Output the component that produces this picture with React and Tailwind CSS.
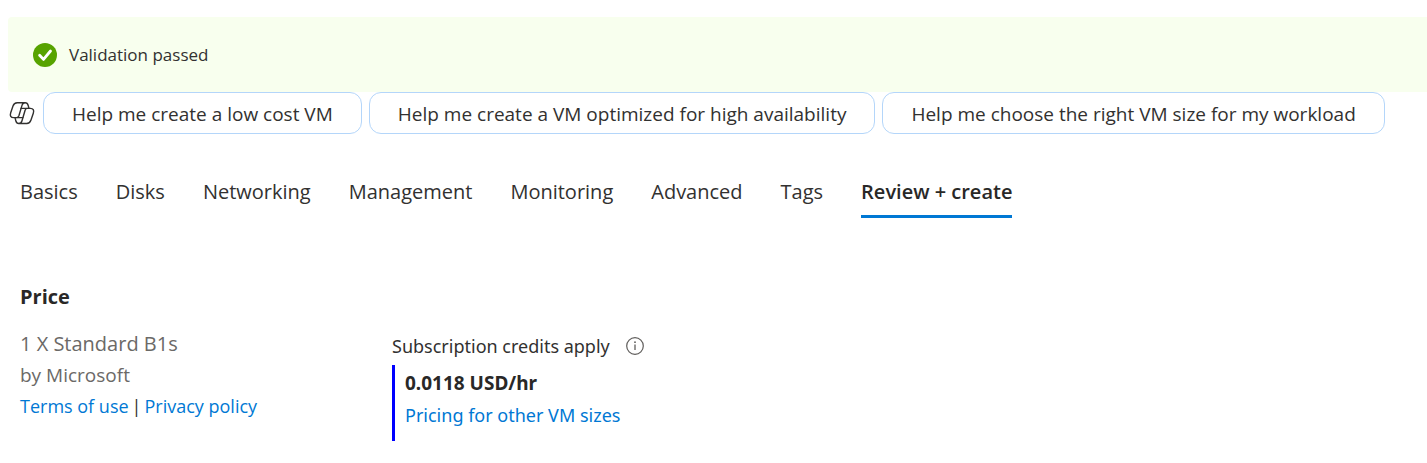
import React from 'react';

const suggestions = [
  'Help me create a low cost VM',
  'Help me create a VM optimized for high availability',
  'Help me choose the right VM size for my workload',
];

const tabs = ['Basics', 'Disks', 'Networking', 'Management', 'Monitoring', 'Advanced', 'Tags', 'Review + create'];

function PassedIcon() {
  return (
    <svg className="size-6 shrink-0" viewBox="0 0 24 24" aria-hidden="true">
      <circle cx="12" cy="12" r="12" fill="#57a300" />
      <path d="M6.600 12.200l3.900 4.200 7-8.400" fill="none" stroke="#fff" strokeWidth="2.800" strokeLinecap="round" strokeLinejoin="round" />
    </svg>
  );
}

function CopilotIcon() {
  return (
    <svg className="h-6 w-[26px] shrink-0" viewBox="0 0 26 24" fill="none" stroke="#323130" strokeWidth="1.4" strokeLinejoin="round" strokeLinecap="round" aria-hidden="true">
      <path d="M16.300 1.800H8.200C6 1.800 4.800 2.800 4 5.100L1.700 11.700C.7 14.700 1.800 16.600 4.600 16.600h3.100c1.200 0 1.800-.6 2.200-1.800L13 4.400c.5-1.700 1.500-2.600 3.300-2.600 1.700 0 2.400 1 2.900 2.700l.8 2.900" />
      <path d="M9.700 22.500h8.100c2.200 0 3.400-1.100 4.200-3.400l2.300-6.800c1-3-.1-4.900-2.900-4.900h-3.100c-1.200 0-1.800.6-2.200 1.800L13 19.800c-.5 1.700-1.500 2.700-3.300 2.700-1.700 0-2.400-1-2.900-2.800l-.8-3.100" />
      <path d="M12 7.400h6.300M7.700 16.600h6.200" />
    </svg>
  );
}

function InfoIcon() {
  return (
    <svg className="size-[18px]" viewBox="0 0 18 18" fill="none" aria-hidden="true">
      <circle cx="9" cy="9" r="8.300" stroke="#605e5c" strokeWidth="1.200" />
      <path d="M9 7.500V13" stroke="#605e5c" strokeWidth="1.300" />
      <circle cx="9" cy="5.200" r="0.900" fill="#605e5c" />
    </svg>
  );
}

export default function App() {
  return (
    <main className="bg-white pt-[17px] font-['Open_Sans','Noto_Sans',sans-serif] text-[19px] leading-[30px] text-[#323130]">
      <div role="status" className="ml-2 flex h-[75px] items-center gap-3 rounded-l-sm bg-[#f8ffee] pl-[25px] text-[17px]">
        <PassedIcon />
        <span className="pt-px">Validation passed</span>
      </div>

      <div className="flex items-center gap-2 pl-[9px]">
        <CopilotIcon />
        <div className="flex gap-[7px]">
          {suggestions.map((text) => (
            <button key={text} type="button" className="h-[42px] rounded-xl border border-[#b4d6fa] px-7 pt-px whitespace-nowrap">
              {text}
            </button>
          ))}
        </div>
      </div>

      <div role="tablist" className="mt-[42px] flex gap-[38px] pl-5 text-xl">
        {tabs.map((tab) => {
          const active = tab === 'Review + create';
          return (
            <button
              key={tab}
              type="button"
              role="tab"
              aria-selected={active}
              className={
                active
                  ? 'h-[42px] border-b-[3px] border-[#0078d4] pb-2 font-semibold whitespace-nowrap text-[#292827]'
                  : 'h-[42px] border-b-[3px] border-transparent pb-2 whitespace-nowrap'
              }
            >
              {tab}
            </button>
          );
        })}
      </div>

      <section className="px-5 pt-16">
        <h2 className="text-xl leading-[30px] font-bold text-[#292827]">Price</h2>
        <div className="mt-[17px] flex">
          <div className="w-[372px] shrink-0 text-[#6b6967]">
            <p className="text-xl leading-[30px]">1 X Standard B1s</p>
            <p className="leading-8">by Microsoft</p>
            <div className="flex gap-[3px] text-[18px] text-[#323130]">
              <a href="#terms" className="text-[#0078d4]">Terms of use</a>
              <span>|</span>
              <a href="#privacy" className="text-[#0078d4]">Privacy policy</a>
            </div>
          </div>
          <div className="font-['Noto_Sans','Open_Sans',sans-serif] text-[18px]">
            <div className="flex items-center gap-4 pt-[2px]">
              <span>Subscription credits apply</span>
              <button type="button" aria-label="More information about subscription credits">
                <InfoIcon />
              </button>
            </div>
            <div className="mt-1 h-[76px] border-l-[3px] border-[#0000ff] pt-[2px] pl-[10px]">
              <p className="text-[19px] leading-8 font-bold text-[#292827]">0.0118 USD/hr</p>
              <a href="#pricing" className="block leading-8 text-[#0078d4]">Pricing for other VM sizes</a>
            </div>
          </div>
        </div>
      </section>
    </main>
  );
}
